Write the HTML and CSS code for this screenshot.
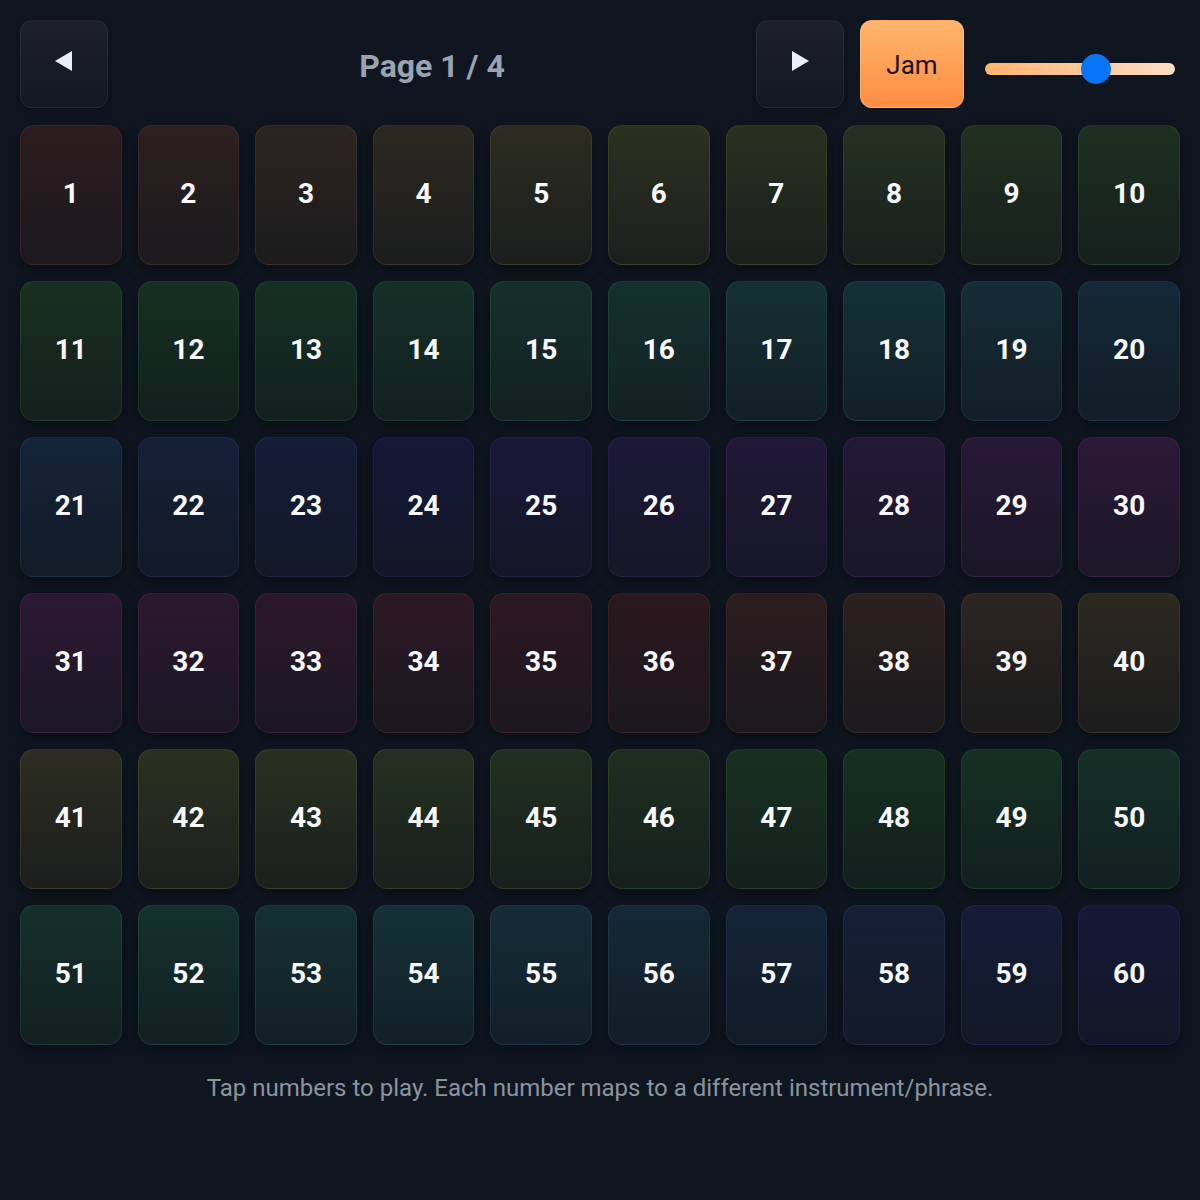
FILE: index.html
```html
<!DOCTYPE html>
<html lang="en">
<head>
<meta charset="utf-8">
<title>Number Jam</title>
<link rel="stylesheet" href="styles.css">
</head>
<body>
<div class="app">
  <header class="toolbar">
    <button class="nav-btn" aria-label="Previous page">
      <svg width="20" height="22" viewBox="0 0 20 22"><path d="M18 1 L1 11 L18 21 Z" fill="#e8eef7"/></svg>
    </button>
    <div class="page-label">Page 1 / 4</div>
    <button class="nav-btn" aria-label="Next page">
      <svg width="20" height="22" viewBox="0 0 20 22"><path d="M2 1 L19 11 L2 21 Z" fill="#e8eef7"/></svg>
    </button>
    <button class="jam-btn">Jam</button>
    <div class="slider" role="slider" aria-valuemin="0" aria-valuemax="100" aria-valuenow="60">
      <div class="slider-track"></div>
      <div class="slider-thumb" style="left:60%"></div>
    </div>
  </header>

  <main class="pad-grid">
    <button class="pad" style="--h:10">1</button>
    <button class="pad" style="--h:20">2</button>
    <button class="pad" style="--h:30">3</button>
    <button class="pad" style="--h:40">4</button>
    <button class="pad" style="--h:50">5</button>
    <button class="pad" style="--h:60">6</button>
    <button class="pad" style="--h:70">7</button>
    <button class="pad" style="--h:80">8</button>
    <button class="pad" style="--h:90">9</button>
    <button class="pad" style="--h:100">10</button>
    <button class="pad" style="--h:110">11</button>
    <button class="pad" style="--h:120">12</button>
    <button class="pad" style="--h:130">13</button>
    <button class="pad" style="--h:140">14</button>
    <button class="pad" style="--h:150">15</button>
    <button class="pad" style="--h:160">16</button>
    <button class="pad" style="--h:170">17</button>
    <button class="pad" style="--h:180">18</button>
    <button class="pad" style="--h:190">19</button>
    <button class="pad" style="--h:200">20</button>
    <button class="pad" style="--h:210">21</button>
    <button class="pad" style="--h:220">22</button>
    <button class="pad" style="--h:230">23</button>
    <button class="pad" style="--h:240">24</button>
    <button class="pad" style="--h:250">25</button>
    <button class="pad" style="--h:260">26</button>
    <button class="pad" style="--h:270">27</button>
    <button class="pad" style="--h:280">28</button>
    <button class="pad" style="--h:290">29</button>
    <button class="pad" style="--h:300">30</button>
    <button class="pad" style="--h:310">31</button>
    <button class="pad" style="--h:320">32</button>
    <button class="pad" style="--h:330">33</button>
    <button class="pad" style="--h:340">34</button>
    <button class="pad" style="--h:350">35</button>
    <button class="pad" style="--h:0">36</button>
    <button class="pad" style="--h:10">37</button>
    <button class="pad" style="--h:20">38</button>
    <button class="pad" style="--h:30">39</button>
    <button class="pad" style="--h:40">40</button>
    <button class="pad" style="--h:50">41</button>
    <button class="pad" style="--h:60">42</button>
    <button class="pad" style="--h:70">43</button>
    <button class="pad" style="--h:80">44</button>
    <button class="pad" style="--h:90">45</button>
    <button class="pad" style="--h:100">46</button>
    <button class="pad" style="--h:110">47</button>
    <button class="pad" style="--h:120">48</button>
    <button class="pad" style="--h:130">49</button>
    <button class="pad" style="--h:140">50</button>
    <button class="pad" style="--h:150">51</button>
    <button class="pad" style="--h:160">52</button>
    <button class="pad" style="--h:170">53</button>
    <button class="pad" style="--h:180">54</button>
    <button class="pad" style="--h:190">55</button>
    <button class="pad" style="--h:200">56</button>
    <button class="pad" style="--h:210">57</button>
    <button class="pad" style="--h:220">58</button>
    <button class="pad" style="--h:230">59</button>
    <button class="pad" style="--h:240">60</button>
  </main>

  <p class="hint">Tap numbers to play. Each number maps to a different instrument/phrase.</p>
</div>
</body>
</html>
```

FILE: styles.css
```css
* {
  box-sizing: border-box;
}

html,
body {
  margin: 0;
  height: 100%;
  background: #0f1620;
}

body {
  font-family: Roboto, "Liberation Sans", Arial, sans-serif;
  color: #e8eef7;
}

.app {
  padding: 20px;
  display: flex;
  flex-direction: column;
}

/* top bar: paging, jam toggle and tempo slider */
.toolbar {
  display: flex;
  align-items: center;
  gap: 16px;
  height: 88px;
}

.nav-btn {
  width: 88px;
  height: 88px;
  flex: none;
  display: flex;
  align-items: center;
  justify-content: center;
  border-radius: 12px;
  border: 1px solid rgba(255, 255, 255, 0.06);
  background: linear-gradient(180deg, #1b202b 0%, #121822 100%);
  box-shadow: 0 4px 10px rgba(0, 0, 0, 0.25);
  padding: 0;
  cursor: pointer;
}

.nav-btn svg {
  display: block;
  margin-top: -6px;
}

.page-label {
  flex: 1;
  text-align: center;
  font-size: 32px;
  font-weight: 700;
  color: #9aa4b0;
  padding-top: 3px;
}

.jam-btn {
  flex: none;
  width: 104px;
  height: 88px;
  border-radius: 12px;
  border: 1px solid rgba(255, 200, 150, 0.5);
  background: linear-gradient(180deg, #ffb56c 0%, #ff8c43 100%);
  color: #1a1410;
  font-family: Roboto, "Liberation Sans", Arial, sans-serif;
  font-size: 26px;
  font-weight: 400;
  padding: 2px 0 0;
  cursor: pointer;
}

.slider {
  position: relative;
  flex: none;
  width: 190px;
  height: 30px;
  margin: 10px 5px 0 5px;
}

.slider-track {
  position: absolute;
  left: 0;
  right: 0;
  top: 9px;
  height: 12px;
  border-radius: 6px;
  background: linear-gradient(90deg, #ffb56c 0%, #ffcaa0 55%, #ffdcc6 100%);
}

.slider-thumb {
  position: absolute;
  top: 0;
  width: 30px;
  height: 30px;
  margin-left: -15px;
  transform: translateX(calc(15px - 30px * 0.6));
  border-radius: 50%;
  background: #0a74f7;
}

/* pad grid */
.pad-grid {
  margin-top: 17px;
  display: grid;
  grid-template-columns: repeat(10, 1fr);
  grid-auto-rows: 140px;
  gap: 16px;
}

.pad {
  border-radius: 14px;
  border: 1px solid hsla(var(--h), 30%, 40%, 0.2);
  background:
    linear-gradient(180deg,
      hsla(var(--h), 65%, 40%, 0.18) 0%,
      hsla(var(--h), 65%, 35%, 0.08) 100%),
    #11161e;
  box-shadow: 0 6px 14px rgba(0, 0, 0, 0.35);
  color: #f7f9fc;
  font-family: Roboto, "Liberation Sans", Arial, sans-serif;
  font-size: 28px;
  font-weight: 700;
  padding: 0 0 4px;
  cursor: pointer;
}

.hint {
  margin: 29px 0 0;
  text-align: center;
  font-size: 24px;
  color: #8a949f;
}
```
